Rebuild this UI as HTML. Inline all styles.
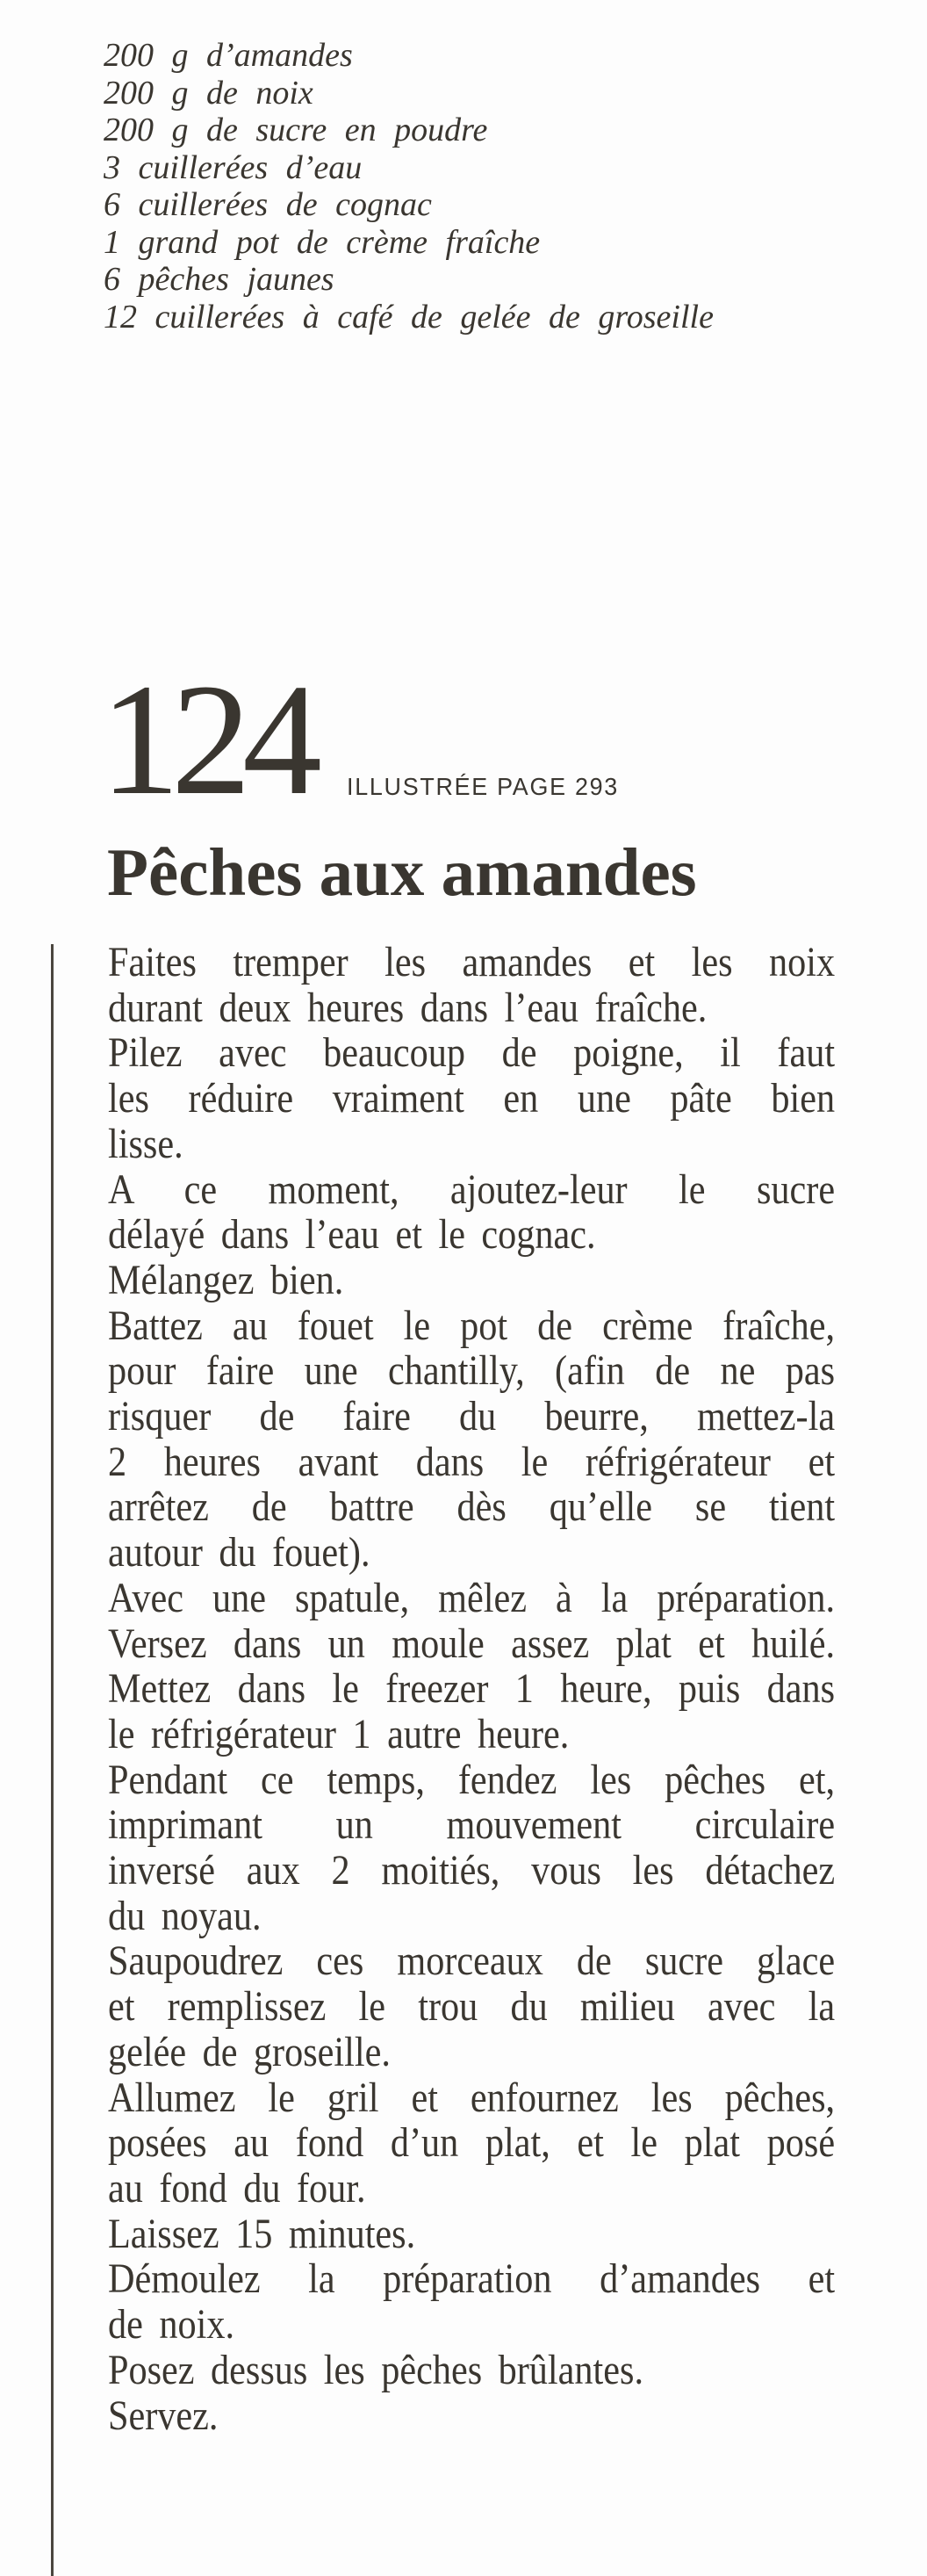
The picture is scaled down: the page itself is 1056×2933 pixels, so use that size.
<!DOCTYPE html>
<html><head><meta charset="utf-8"><style>
html,body{margin:0;padding:0;background:#fdfdfd;}
body{width:1056px;height:2933px;position:relative;overflow:hidden;color:#3a3630;font-family:"Liberation Serif",serif;}
.ing{position:absolute;left:118px;top:42px;font-style:italic;font-size:38px;line-height:42.5px;word-spacing:11px;}
.num{position:absolute;left:114px;top:752px;font-size:182px;line-height:182px;letter-spacing:-10px;}
.ill{position:absolute;left:395px;top:880px;font-family:"Liberation Sans",sans-serif;font-size:28px;letter-spacing:1.8px;transform:scaleX(0.96);transform-origin:left;}
.title{position:absolute;left:122px;top:955px;font-size:77px;font-weight:bold;line-height:77px;}
.bar{position:absolute;left:58px;top:1075px;width:3px;height:1858px;background:#4a463f;}
.body{position:absolute;left:123px;top:1070px;width:941px;font-size:48px;line-height:51.7px;transform:scaleX(0.88);transform-origin:left top;}
.body div{white-space:nowrap;word-spacing:9px;}
.j{text-align:justify;text-align-last:justify;white-space:normal!important;word-spacing:0!important;}
</style></head><body>
<div class="ing">
<div>200 g d’amandes</div>
<div>200 g de noix</div>
<div>200 g de sucre en poudre</div>
<div>3 cuillerées d’eau</div>
<div>6 cuillerées de cognac</div>
<div>1 grand pot de crème fraîche</div>
<div>6 pêches jaunes</div>
<div>12 cuillerées à café de gelée de groseille</div>
</div>
<div class="num">124</div>
<div class="ill">ILLUSTRÉE PAGE 293</div>
<div class="title">Pêches aux amandes</div>
<div class="bar"></div>
<div class="body">
<div class="j">Faites tremper les amandes et les noix</div>
<div>durant deux heures dans l’eau fraîche.</div>
<div class="j">Pilez avec beaucoup de poigne, il faut</div>
<div class="j">les réduire vraiment en une pâte bien</div>
<div>lisse.</div>
<div class="j">A ce moment, ajoutez-leur le sucre</div>
<div>délayé dans l’eau et le cognac.</div>
<div>Mélangez bien.</div>
<div class="j">Battez au fouet le pot de crème fraîche,</div>
<div class="j">pour faire une chantilly, (afin de ne pas</div>
<div class="j">risquer de faire du beurre, mettez-la</div>
<div class="j">2 heures avant dans le réfrigérateur et</div>
<div class="j">arrêtez de battre dès qu’elle se tient</div>
<div>autour du fouet).</div>
<div class="j">Avec une spatule, mêlez à la préparation.</div>
<div class="j">Versez dans un moule assez plat et huilé.</div>
<div class="j">Mettez dans le freezer 1 heure, puis dans</div>
<div>le réfrigérateur 1 autre heure.</div>
<div class="j">Pendant ce temps, fendez les pêches et,</div>
<div class="j">imprimant un mouvement circulaire</div>
<div class="j">inversé aux 2 moitiés, vous les détachez</div>
<div>du noyau.</div>
<div class="j">Saupoudrez ces morceaux de sucre glace</div>
<div class="j">et remplissez le trou du milieu avec la</div>
<div>gelée de groseille.</div>
<div class="j">Allumez le gril et enfournez les pêches,</div>
<div class="j">posées au fond d’un plat, et le plat posé</div>
<div>au fond du four.</div>
<div>Laissez 15 minutes.</div>
<div class="j">Démoulez la préparation d’amandes et</div>
<div>de noix.</div>
<div>Posez dessus les pêches brûlantes.</div>
<div>Servez.</div>
</div>
</body></html>
